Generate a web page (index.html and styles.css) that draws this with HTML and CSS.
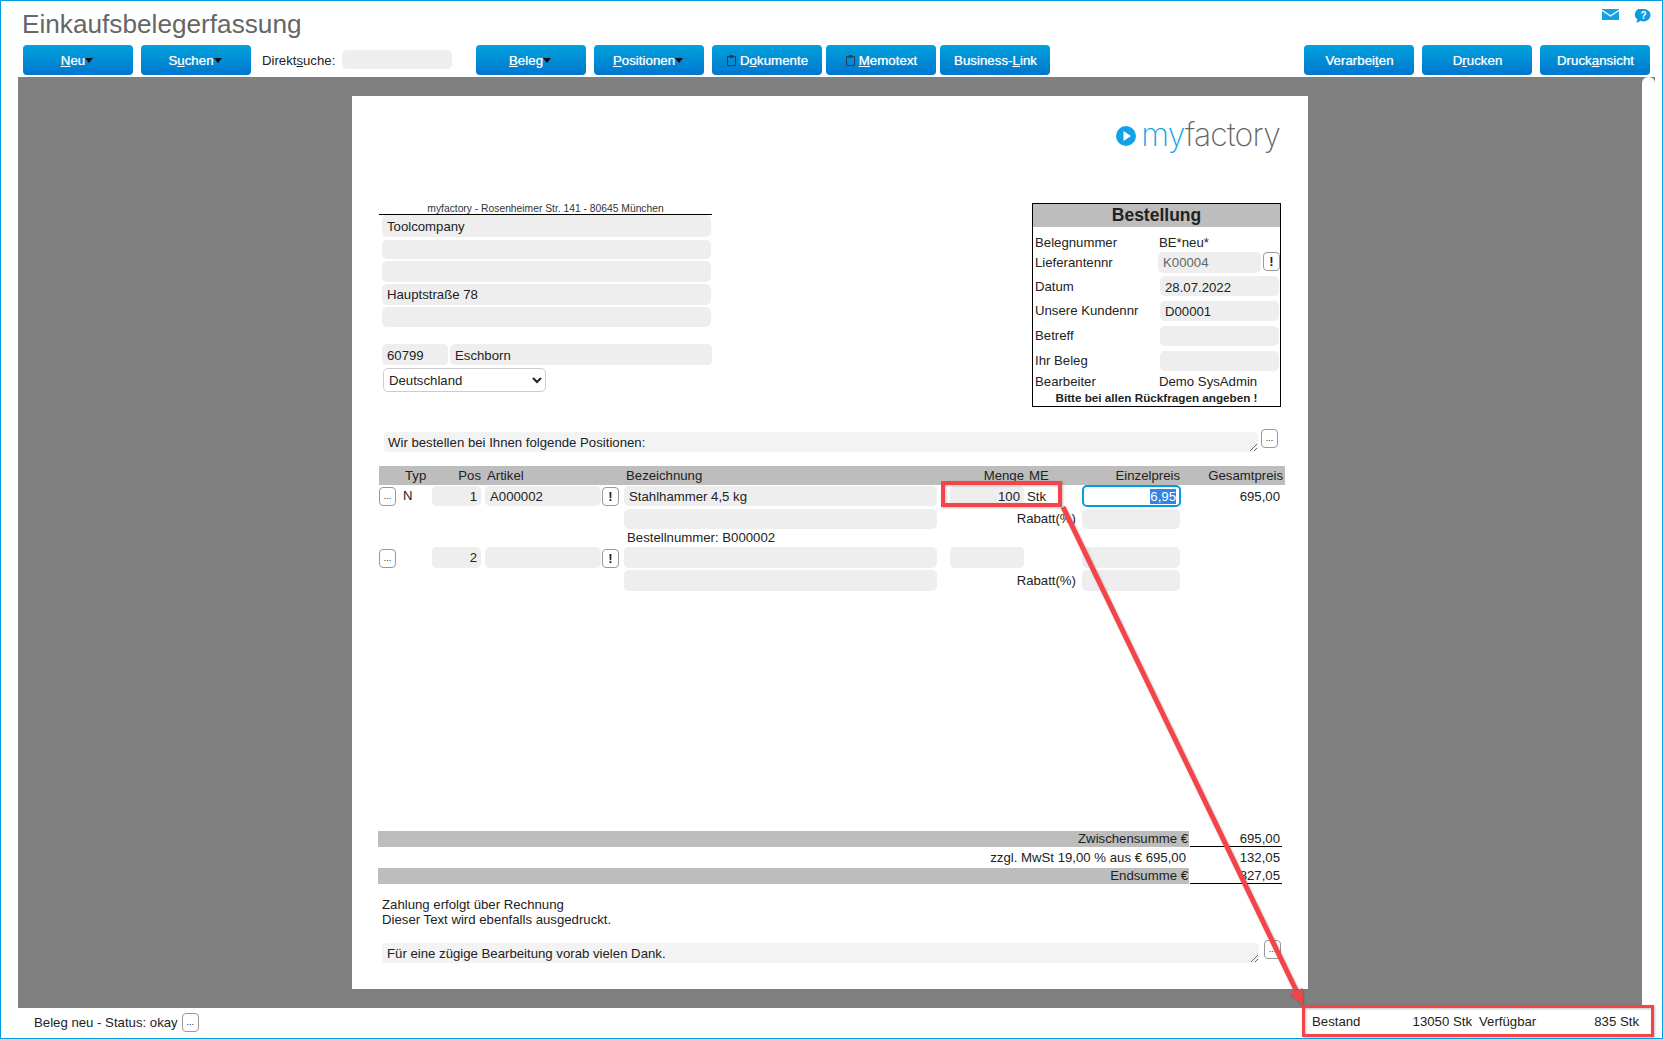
FILE: index.html
```html
<!DOCTYPE html>
<html lang="de">
<head>
<meta charset="utf-8">
<title>Einkaufsbelegerfassung</title>
<link rel="stylesheet" href="styles.css">
</head>
<body>
<div class="app">
  <header class="head">
    <h1 class="title">Einkaufsbelegerfassung</h1>
    <div class="head-icons">
      <svg class="ico-mail" viewBox="0 0 17 11"><rect width="17" height="11" fill="#12a2e6"/><polyline points="0,1.2 8.5,7 17,1.2" fill="none" stroke="#fff" stroke-width="1.2"/></svg>
      <svg class="ico-help" viewBox="0 0 17 14"><path d="M9.5 0a7 6.2 0 1 1-3 11.8c-1.2 1-2.6 1.7-4.5 2 .8-1 1.3-2 1.3-3.2A6.2 6.2 0 0 1 9.500 0z" fill="#0a9be0"/><text x="9.500" y="10" text-anchor="middle" class="ico-q">?</text></svg>
    </div>
  </header>

  <nav class="toolbar">
    <button class="btn"><span><u>N</u>eu</span><i class="caret"></i></button>
    <button class="btn"><span>S<u>u</u>chen</span><i class="caret"></i></button>
    <label class="search-label">Direkt<u>s</u>uche:</label>
    <div class="search-field"></div>
    <button class="btn btn-gap"><span><u>B</u>eleg</span><i class="caret"></i></button>
    <button class="btn"><span><u>P</u>ositionen</span><i class="caret"></i></button>
    <button class="btn"><svg class="clip" viewBox="0 0 9 11"><path d="M.5 1.500h8v9h-8zM3 .5h3v2H3z" fill="none" stroke="#1d3f5c"/></svg><span>D<u>o</u>kumente</span></button>
    <button class="btn btn-near"><svg class="clip" viewBox="0 0 9 11"><path d="M.5 1.500h8v9h-8zM3 .5h3v2H3z" fill="none" stroke="#1d3f5c"/></svg><span><u>M</u>emotext</span></button>
    <button class="btn btn-near"><span>Business-<u>L</u>ink</span></button>
    <button class="btn btn-right">Verarbei<u>t</u>en</button>
    <button class="btn">D<u>r</u>ucken</button>
    <button class="btn">Druck<u>a</u>nsicht</button>
  </nav>

  <main class="workspace">
    <div class="canvas">
      <article class="page">
        <div class="logo">
          <svg class="logo-mark" viewBox="0 0 20 20"><circle cx="10" cy="10" r="10" fill="#12a2e6"/><path d="M7.500 5 15 10l-7.500 5z" fill="#fff"/></svg>
          <span class="logo-text"><span class="logo-my">my</span>factory</span>
        </div>

        <section class="top">
          <div class="address">
            <div class="sender">myfactory - Rosenheimer Str. 141 - 80645 München</div>
            <div class="addr-fields">
              <div class="field">Toolcompany</div>
              <div class="field"></div>
              <div class="field"></div>
              <div class="field">Hauptstraße 78</div>
              <div class="field"></div>
            </div>
            <div class="city-row">
              <div class="field zip">60799</div>
              <div class="field city">Eschborn</div>
            </div>
            <select class="country"><option>Deutschland</option></select>
          </div>

          <div class="order">
            <div class="order-title">Bestellung</div>
            <div class="order-grid">
              <span>Belegnummer</span><span class="val">BE*neu*</span>
              <span>Lieferantennr</span>
              <div class="supplier"><div class="field muted">K00004</div><button class="mini mini-bang">!</button></div>
              <span class="low">Datum</span><div class="field inset inset-low">28.07.2022</div>
              <span>Unsere Kundennr</span><div class="field inset">D00001</div>
              <span>Betreff</span><div class="field inset"></div>
              <span>Ihr Beleg</span><div class="field inset"></div>
              <span>Bearbeiter</span><span class="val">Demo SysAdmin</span>
              <strong class="order-note">Bitte bei allen Rückfragen angeben !</strong>
            </div>
          </div>
        </section>

        <section class="intro">
          <textarea class="note note-intro" rows="1">Wir bestellen bei Ihnen folgende Positionen:</textarea>
          <button class="mini">...</button>
        </section>

        <section class="positions">
          <div class="cols thead">
            <span></span><span class="h-typ">Typ</span><span class="h-pos">Pos</span><span class="h-art">Artikel</span><span></span><span class="h-bez">Bezeichnung</span><span class="h-men">Menge</span><span class="h-me">ME</span><span class="h-ep">Einzelpreis</span><span class="h-gp">Gesamtpreis</span>
          </div>
          <div class="cols tbody">
            <button class="mini">...</button><span class="typ">N</span><div class="field f-pos">1</div><div class="field f-art">A000002</div><button class="mini mini-bang">!</button><div class="field f-bez">Stahlhammer 4,5 kg</div><div class="field f-men">100</div><span class="me">Stk</span><div class="field f-focus"><span class="sel">6,95</span></div><span class="total">695,00</span>

            <span class="sp3"></span><div class="field f-bez"></div><span class="rabatt">Rabatt(%)</span><div class="field f-ep"></div><span></span>

            <span class="sp3"></span><span class="order-no">Bestellnummer: B000002</span><span class="sp5"></span>

            <button class="mini">...</button><span></span><div class="field f-pos tall">2</div><div class="field f-art tall"></div><button class="mini mini-bang">!</button><div class="field f-bez tall"></div><div class="field f-men tall"></div><span></span><div class="field f-ep tall"></div><span></span>

            <span class="sp3"></span><div class="field f-bez tall"></div><span class="rabatt">Rabatt(%)</span><div class="field f-ep tall"></div><span></span>
          </div>
        </section>

        <section class="sums">
          <div class="sum-label bar">Zwischensumme €</div><div class="sum-val line">695,00</div>
          <div class="sum-label">zzgl. MwSt 19,00 % aus € 695,00</div><div class="sum-val">132,05</div>
          <div class="sum-label bar">Endsumme €</div><div class="sum-val line">827,05</div>
        </section>

        <p class="terms">Zahlung erfolgt über Rechnung<br>Dieser Text wird ebenfalls ausgedruckt.</p>

        <section class="outro">
          <textarea class="note note-outro" rows="1">Für eine zügige Bearbeitung vorab vielen Dank.</textarea>
          <button class="mini">...</button>
        </section>
      </article>
    </div>
    <div class="track"></div>
  </main>

  <footer class="status">
    <span>Beleg neu - Status: okay</span>
    <button class="mini status-btn">...</button>
    <div class="stock">
      <div class="stock-cell"><span>Bestand</span><span>13050 Stk</span></div>
      <div class="stock-cell"><span>Verfügbar</span><span>835 Stk</span></div>
    </div>
  </footer>

  <svg class="markup" viewBox="0 0 1663 1039">
    <g class="markup-ink">
      <rect x="943" y="483" width="117" height="22" fill="none" stroke="#f4444a" stroke-width="4"/>
      <rect x="1303.500" y="1006.500" width="349" height="29" fill="none" stroke="#f4444a" stroke-width="3"/>
      <line x1="1063" y1="507" x2="1296" y2="990" stroke="#f4444a" stroke-width="5"/>
      <polygon points="1303,1005 1289.500,994 1302.500,988" fill="#f4444a"/>
    </g>
  </svg>
</div>
</body>
</html>
```

FILE: styles.css
```css
* { box-sizing: border-box; }
html, body { margin: 0; height: 100%; }
body {
  font-family: "Liberation Sans", Arial, sans-serif;
  font-size: 13.2px;
  color: #222;
  background: #fff;
  overflow: hidden;
}
button { font-family: inherit; }

.app {
  position: relative;
  width: 1663px;
  height: 1039px;
  border: 1px solid #009de0;
  display: flex;
  flex-direction: column;
  overflow: hidden;
}

/* header */
.head { height: 44px; display: flex; justify-content: space-between; align-items: flex-start; padding: 0 11px 0 21px; }
.title { margin: 8px 0 0; font-size: 26.2px; line-height: 30px; font-weight: 400; color: #666; }
.head-icons { display: flex; gap: 15px; padding-top: 8px; }
.ico-mail { width: 17px; height: 11px; }
.ico-help { width: 17px; height: 14px; }
.ico-q { font: 700 10px "Liberation Sans", sans-serif; fill: #fff; }

/* toolbar */
.toolbar { height: 30px; display: flex; align-items: stretch; gap: 8px; padding: 0 12px 0 22px; flex: none; }
.btn {
  width: 110px;
  border: 0;
  border-radius: 4px;
  padding: 0 0 0 1px;
  background: linear-gradient(#00a2dc, #0076cf);
  color: #fff;
  font-size: 13.33px;
  text-shadow: 0 0 1px rgba(255,255,255,.7);
  display: flex;
  align-items: center;
  justify-content: center;
}
.caret { width: 0; height: 0; margin-right: 3px; border: 4px solid transparent; border-top: 5px solid #111; border-bottom: 0; }
.clip { width: 9px; height: 11px; margin-right: 4px; }
.search-label { margin-left: 3px; align-self: center; color: #222; width: 73px; white-space: nowrap; }
.search-field { width: 110px; height: 19px; margin: 5px 0 0 -1px; background: #eee; border-radius: 5px; }
.btn-gap { margin-left: 16px; }
.btn-near { margin-left: -4px; }
.btn-right { margin-left: auto; }

/* workspace */
.workspace { height: 931px; margin: 2px 7px 0 17px; display: flex; background: #808080; flex: none; }
.canvas { flex: 1; padding: 19px 0 0 334px; overflow: hidden; }
.track { width: 13px; background: #fff; border-radius: 6px 6px 0 0; }

.page { width: 956px; height: 893px; background: #fff; padding-left: 26px; }

.logo { height: 107px; padding: 21px 28px 0 0; display: flex; justify-content: flex-end; align-items: flex-start; gap: 5px; }
.logo-mark { width: 20px; height: 20px; margin-top: 9px; }
.logo-text { font-family: Inter, sans-serif; font-weight: 250; font-size: 32px; line-height: 36px; letter-spacing: -.8px; color: #666; }
.logo-my { color: #12a2e6; }

.field { background: #eee; border-radius: 5px; height: 21px; padding: 0 5px; display: flex; align-items: center; white-space: nowrap; }

.top { display: flex; justify-content: space-between; padding: 0 27px 0 1px; }
.address { width: 333px; }
.sender { height: 12px; font-size: 10.3px; line-height: 11px; text-align: center; color: #333; border-bottom: 1px solid #000; white-space: nowrap; }
.addr-fields { display: grid; grid-template-rows: 22px 22px 23px 23px 22px; align-items: end; padding: 0 1px 0 3px; }
.addr-fields .field:nth-child(1) { height: 22px; }
.addr-fields .field:nth-child(2) { height: 19px; }
.addr-fields .field:nth-child(5) { height: 20px; }
.city-row { display: flex; gap: 2px; margin: 17px 0 0 3px; }
.city-row .field { padding-top: 2px; }
.zip { width: 66px; }
.city { flex: 1; }
.country {
  display: block;
  width: 163px;
  height: 24px;
  margin: 3px 0 0 4px;
  padding: 0 1px;
  border: 1px solid #ccc;
  border-radius: 5px;
  background-color: #fff;
  font: 13.2px "Liberation Sans", Arial, sans-serif;
  color: #222;
}

.order { width: 249px; height: 204px; border: 1px solid #000; }
.order-title { height: 23px; background: #bdbdbd; font-size: 17.5px; line-height: 22px; font-weight: 700; text-align: center; }
.order-grid {
  display: grid;
  grid-template-columns: 123px 122px;
  grid-template-rows: 21px 20px 23px 25px 25px 25px 21px 13px;
  align-items: end;
  padding: 5px 0 0 2px;
}
.order-grid > span { line-height: 20px; }
.order-grid > .low { line-height: 18px; }
.order-grid .val { padding-left: 1px; }
.supplier { display: flex; gap: 2px; }
.supplier .field { width: 103px; }
.muted { color: #666; }
.inset { margin-left: 2px; height: 20px; width: 119px; }
.inset-low { padding-top: 2px; }
.order-note { grid-column: 1 / -1; font-size: 11.7px; line-height: 14px; text-align: center; margin-left: -2px; }

.mini {
  width: 17px;
  height: 19px;
  padding: 0;
  background: #fff;
  border: 1px solid #999;
  border-radius: 4px;
  color: #222;
  font-size: 9px;
  line-height: 17px;
}
.mini-bang { font-size: 13px; font-weight: 700; color: #222; }

.note {
  display: block;
  height: 20px;
  padding: 3px 5px 1px;
  border: 0;
  border-radius: 4px;
  background: #f3f3f3;
  color: #222;
  font: 13.2px/16px "Liberation Sans", Arial, sans-serif;
  overflow: hidden;
}
.intro { display: flex; gap: 3px; margin: 22px 0 0 6px; }
.note-intro { width: 874px; margin-top: 3px; padding-left: 4px; }

.positions { margin: 14px 0 0 1px; width: 906px; }
.cols { display: grid; grid-template-columns: 18px 35px 53px 117px 22px 326px 74px 58px 99px 104px; }
.thead { height: 19px; background: #bdbdbd; line-height: 19px; white-space: nowrap; }
.h-typ { padding-left: 8px; }
.h-pos { text-align: right; padding-right: 4px; }
.h-art { padding-left: 2px; }
.h-bez { padding-left: 2px; }
.h-men { text-align: right; }
.h-me { padding-left: 5px; }
.h-ep { text-align: right; padding-right: 1px; }
.h-gp { text-align: right; padding-right: 2px; }

.tbody { grid-template-rows: 20px 23px 18px 21px 23px; align-items: end; margin-top: 1px; }
.tbody .field { height: 20px; }
.tbody .tall { height: 21px; }
.typ { padding-left: 6px; line-height: 20px; }
.f-pos { width: 49px; justify-content: flex-end; padding-right: 4px; }
.f-art { width: 116px; }
.f-bez { width: 313px; }
.f-men { justify-content: flex-end; padding-right: 4px; }
.f-ep { width: 98px; }
.me { padding-left: 3px; line-height: 18px; }
.tbody .f-focus { width: 99px; height: 22px; margin-bottom: -1px; background: #fff; border: 2px solid #009de0; border-radius: 5px; justify-content: flex-end; padding: 0 3px; }
.sel { background: #3584e4; color: #fff; }
.total { text-align: right; padding-right: 5px; line-height: 18px; }
.sp3 { grid-column: span 5; }
.sp5 { grid-column: span 4; }
.rabatt { grid-column: span 2; text-align: right; padding-right: 6px; line-height: 20px; }
.order-no { padding-left: 3px; line-height: 18px; white-space: nowrap; }

.sums { display: grid; grid-template-columns: 812px 92px; grid-template-rows: 16px 21px 16px; margin-top: 240px; }
.sum-label { text-align: right; padding-right: 4px; line-height: 21px; }
.sum-label.bar { background: #bdbdbd; line-height: 16px; margin-right: 1px; padding-right: 1px; }
.sum-val { text-align: right; padding-right: 2px; line-height: 21px; }
.sum-val.line { line-height: 16px; border-bottom: 1px solid #000; }

.terms { margin: 13px 0 0 4px; line-height: 15px; }

.outro { display: flex; gap: 5px; margin: 13px 0 0 4px; }
.note-outro { width: 877px; margin-top: 3px; }

/* status */
.status { flex: 1; display: flex; align-items: center; padding: 0 23px 2px 33px; }
.status-btn { margin: 0 0 0 4px; }
.stock { margin-left: auto; display: flex; gap: 7px; margin-top: -2px; }
.stock-cell { width: 160px; display: flex; justify-content: space-between; }

/* annotation drawn on top of the screenshot */
.markup { position: absolute; left: -1px; top: -1px; width: 1663px; height: 1039px; pointer-events: none; }
.markup-ink { filter: drop-shadow(1px 1px 1px rgba(0,0,0,.25)); }
```
